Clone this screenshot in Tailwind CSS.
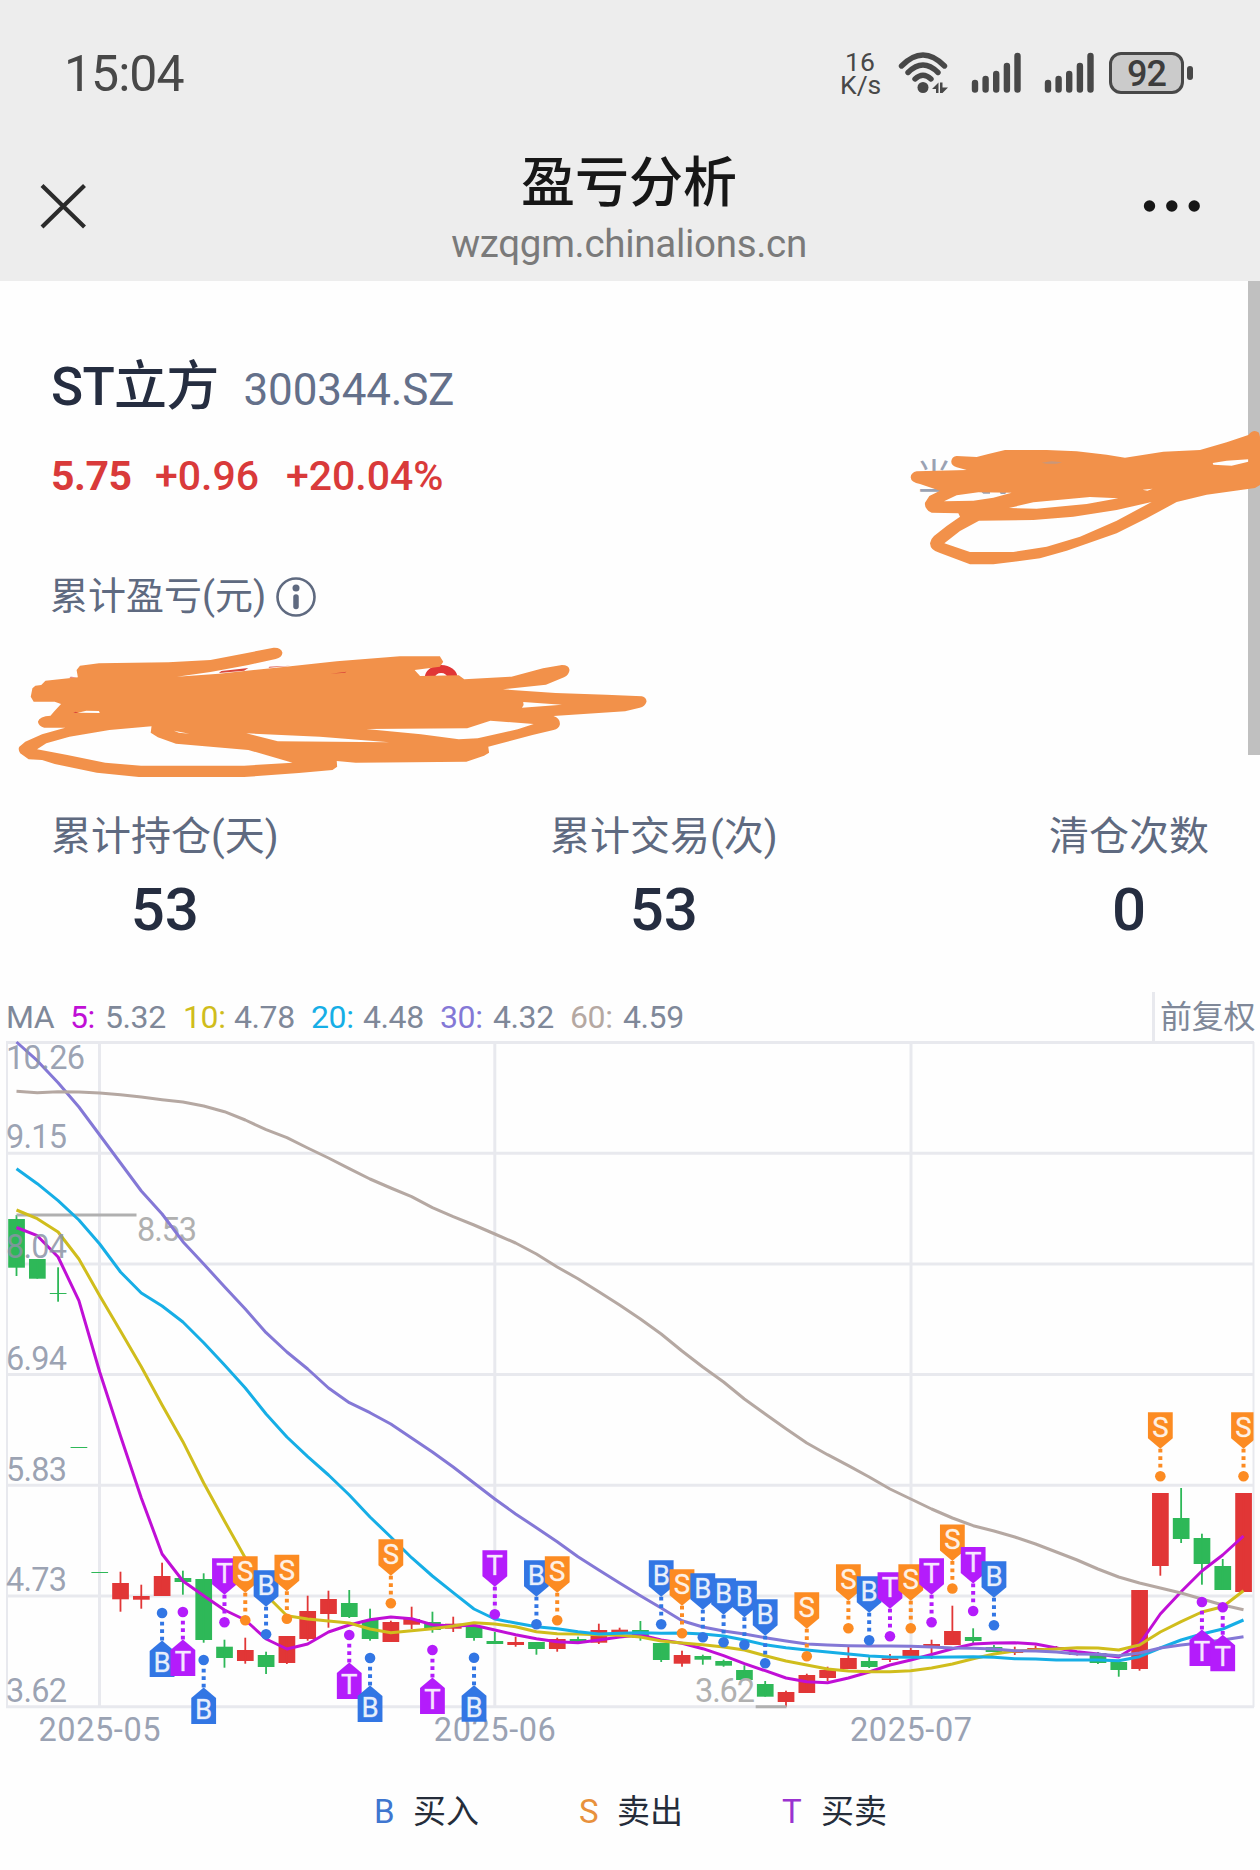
<!DOCTYPE html>
<html lang="zh-CN">
<head>
<meta charset="utf-8">
<meta name="viewport" content="width=device-width, initial-scale=1">
<title>盈亏分析</title>
<script src="https://cdn.jsdelivr.net/npm/@tailwindcss/browser@4"></script>
</head>
<body class="bg-white">
<div class="relative w-[1260px] h-[1870px] overflow-hidden bg-[#fefefe] font-['Roboto','Noto_Sans_CJK_SC',sans-serif]">

  <header class="h-[281px] bg-[#ededed]">
    <!-- status bar -->
    <div class="flex h-[145px] items-center justify-between pl-[64px] pr-[67px]">
      <div class="mt-[2px] text-[50px] leading-[60px] tracking-[-1px] text-[#484848]">15:04</div>
      <div class="flex h-[48px] items-center text-[#484848]">
        <div class="mr-[18px] w-[40px] text-center text-[26.500px] leading-[23px]"><div>16</div><div>K/s</div></div>
        <svg class="mr-[22px]" width="51" height="42" viewBox="0 0 51 42" fill="none" stroke="#484848" stroke-width="5.4" stroke-linecap="round">
          <path d="M3.5 14Q25 -8 46.500 14M10 20.500Q25 5.500 40 20.500M17 27Q25 19.500 33 27"/>
          <circle cx="25" cy="35.500" r="5.500" fill="#484848" stroke="none"/>
          <path d="M34 37L40.500 30.500V41H38V37ZM42 30.500H44.500V35.500H50L44.500 41H42Z" fill="#484848" stroke="none"/>
        </svg>
        <svg class="mr-[23px]" width="50" height="42" viewBox="0 0 50 42" stroke="#484848" stroke-width="6.4" stroke-linecap="round"><path d="M4 31V37.500M14.600 27V37.500M25.200 22V37.500M35.900 14V37.500M46.500 4V37.500"/></svg>
        <svg class="mr-[15px]" width="50" height="42" viewBox="0 0 50 42" stroke="#484848" stroke-width="6.4" stroke-linecap="round"><path d="M4 31V37.500M14.600 27V37.500M25.200 22V37.500M35.900 14V37.500M46.500 4V37.500"/></svg>
        <div class="flex items-center">
          <div class="flex h-[42px] w-[75px] items-center justify-center rounded-[12px] border-[3.500px] border-[#484848] bg-[#cbcbcb] pt-[2px] text-[36px] font-medium leading-[40px] tracking-[-1px] text-[#3d3d3d]">92</div>
          <div class="ml-[3px] h-[14px] w-[6px] rounded-full bg-[#484848]"></div>
        </div>
      </div>
    </div>
    <!-- title bar -->
    <div class="grid h-[136px] grid-cols-[1fr_auto_1fr] pl-[40px] pr-[42px]">
      <svg class="mt-[38px]" width="46" height="46" viewBox="0 0 46 46" stroke="#2b2b2b" stroke-width="4.200"><path d="M2 2.500L44.500 44M44.500 2.500L2 44"/></svg>
      <div class="flex flex-col items-center pt-[4px]">
        <h1 class="text-[54px] font-medium leading-[70px] text-[#171717]">盈亏分析</h1>
        <p class="text-[38.500px] leading-[50px] tracking-[-0.3px] text-[#7a7a7a]">wzqgm.chinalions.cn</p>
      </div>
      <svg class="mt-[54px] mr-[17px] justify-self-end" width="58" height="14" viewBox="0 0 58 14" fill="#171717"><circle cx="6.500" cy="7" r="5.700"/><circle cx="28.800" cy="7" r="5.700"/><circle cx="51.200" cy="7" r="5.700"/></svg>
    </div>
  </header>

  <!-- stock summary -->
  <section class="h-[532px] px-[51px] pt-[76px]">
    <div class="flex items-baseline">
      <h2 class="text-[53px] font-medium leading-[60px] text-[#252d40] tracking-[-0.7px]">ST立方</h2>
      <span class="ml-[25px] text-[44px] leading-[60px] tracking-[-0.2px] text-[#64708a]">300344.SZ</span>
    </div>
    <div class="mt-[31px] flex h-[50px] items-start justify-between">
      <div class="flex text-[41px] leading-[50px] text-[#d93a3a]">
        <span class="w-[104px] font-bold tracking-[-0.5px]">5.75</span>
        <span class="w-[131px] font-medium">+0.96</span>
        <span class="font-medium">+20.04%</span>
      </div>
      <span class="mr-[257px] mt-[2px] text-[36px] leading-[50px] text-[#9aa2b3]">当</span>
    </div>
    <div class="mt-[73px] flex items-center text-[38px] leading-[44px] text-[#5f6a80]">
      <span class="-ml-px">累计盈亏(元)</span>
      <svg class="ml-[9px] mt-[2px]" width="42" height="42" viewBox="0 0 42 42" fill="none" stroke="#5f6a80"><circle cx="21" cy="21" r="18.500" stroke-width="2.600"/><circle cx="21" cy="12" r="3.500" fill="#5f6a80" stroke="none"/><path d="M21 21V30.500" stroke-width="5.500" stroke-linecap="round"/></svg>
    </div>
  </section>

  <!-- statistics -->
  <section class="flex h-[183px] justify-between px-[51px] text-center">
    <div><div class="text-[40px] leading-[48px] text-[#5f6a80]">累计持仓(天)</div><div class="mt-[14px] text-[60px] font-medium leading-[70px] text-[#252d40]">53</div></div>
    <div><div class="text-[40px] leading-[48px] text-[#5f6a80]">累计交易(次)</div><div class="mt-[14px] text-[60px] font-medium leading-[70px] text-[#252d40]">53</div></div>
    <div><div class="text-[40px] leading-[48px] text-[#5f6a80]">清仓次数</div><div class="mt-[14px] text-[60px] font-medium leading-[70px] text-[#252d40]">0</div></div>
  </section>

  <!-- moving average legend -->
  <div class="flex h-[44px] justify-between pl-[6px] text-[32px] leading-[40px] tracking-[-0.4px] text-[#7f8899]">
    <div class="flex pt-px">
      <span class="w-[64px]">MA</span>
      <span class="w-[35px] text-[#c00fd6]">5:</span><span class="w-[78px]">5.32</span>
      <span class="w-[51px] text-[#d0bd1c]">10:</span><span class="w-[77px]">4.78</span>
      <span class="w-[52px] text-[#16aee6]">20:</span><span class="w-[77px]">4.48</span>
      <span class="w-[53px] text-[#8478d6]">30:</span><span class="w-[77px]">4.32</span>
      <span class="w-[53px] text-[#b5a8a2]">60:</span><span>4.59</span>
    </div>
    <div class="-mt-[4px] h-[50px] w-[108px] border-l-[3px] border-[#e8e9ee] pl-[5px] pt-[5px] tracking-[-0.3px]">前复权</div>
  </div>

  <svg id="chart" class="block" width="1260" height="750" viewBox="0 1040 1260 750" font-family="Roboto, sans-serif"></svg>

  <!-- marker legend -->
  <div class="flex text-[33px] leading-[40px] text-[#252d3a] pl-[374px] pt-[2px]">
    <span class="w-[39px] text-[#3f76d0]">B</span><span class="w-[166px]">买入</span>
    <span class="w-[38px] text-[#e8913c]">S</span><span class="w-[165px]">卖出</span>
    <span class="w-[39px] text-[#9a33d0]">T</span><span>买卖</span>
  </div>

  <div class="absolute right-0 top-[281px] h-[474px] w-[12px] bg-[#c0c0c0]"></div>

  <!-- hand-drawn redactions -->
  <svg class="absolute left-0 top-0" width="1260" height="1000" viewBox="0 0 1260 1000">
    <g transform="translate(0 340) scale(.42092 .33333)">
      <ellipse cx="1048" cy="1014" rx="27" ry="27" fill="none" stroke="#e13636" stroke-width="24"/>
      <path fill="#f2914a" fill-rule="evenodd" d="M182 990L190 977L235 970L400 967L500 960L590 938L650 923Q668 922 671 938Q670 952 655 957L590 975L500 996L420 1010L520 1001L690 979L800 964L950 949H1045L1053 965L1045 980L985 990L998 1008L1090 1006L1103 1018L1215 1010L1290 985L1335 975Q1352 975 1353 990Q1352 1005 1340 1012L1297 1034L1195 1048L1320 1059L1440 1064L1525 1069Q1536 1073 1536 1085Q1532 1100 1520 1103L1485 1114L1315 1128Q1332 1136 1330 1154Q1328 1165 1315 1170L1265 1185L1160 1220L1162 1238L1150 1247L1108 1265L845 1268L800 1263L801 1280L790 1290L710 1299L580 1311H330L230 1298L130 1272L100 1260L68 1258L48 1240Q42 1228 46 1220L60 1205L100 1183L155 1163H105Q92 1158 90 1145Q94 1128 120 1127L128 1115L145 1092L130 1085H80L73 1070L77 1045L84 1037L98 1035L108 1022L185 1012Z
        M88 1228L110 1210L165 1190L260 1170L360 1159L358 1178L375 1192L418 1211L590 1230L695 1268L580 1277H335L250 1268L160 1245Z
        M870 1167L1110 1165L1165 1142L1268 1152L1230 1168L1135 1195L1090 1198L1000 1183Z
        M585 1180L760 1190L925 1207L660 1204Z
        M413 1172L450 1181L425 1178ZM1243 1086L1335 1094L1240 1103L1244 1095ZM185 1118L205 1112L235 1113L237 1119Z"/>
      <path fill="#d9463b" d="M520 999L526 993L590 984L580 992ZM638 983L640 980L690 977ZM165 1013L168 1010L182 1012ZM174 1119L180 1115L186 1119ZM785 1001L823 995L820 998Z"/>
    </g>
    <g transform="translate(860 400) scale(.33333)">
      <path fill="#9aa2b3" d="M362 274H390V281H370ZM418 274H440L436 282H422Z"/>
      <path fill="#f2914a" fill-rule="evenodd" d="M152 232Q153 218 170 214L320 210L290 202Q272 196 274 183Q276 169 290 168L350 171L385 162L435 150H560L650 154L740 164L795 173L910 155L1020 150L1100 127L1165 105Q1180 86 1197 98L1200 110V255L1185 264L1040 284L950 306L860 355L770 400L620 452L540 475L400 493H330L240 459Q211 452 210 430Q211 418 222 408L260 378L300 350L295 340L215 338Q192 328 195 308L208 288L240 272L180 252Q153 248 152 232Z
        M252 304L290 286L355 277L455 278L400 293L340 302Z
        M447 324L520 307L690 291L775 295L680 312L530 326Z
        M253 430L300 393L357 362L520 360L640 350L770 330L875 306L770 362L660 410L560 440L460 456H330Z
        M1058 189L1100 182L1165 178V185L1115 197L1060 194ZM848 269L878 266L862 272Z"/>
      <path fill="#c9977a" d="M545 188L575 184L606 187L590 191H560Z"/>
    </g>
  </svg>
</div>

<script>
  const xAt = i => 16.5 + i * 20.797;
  const RED = '#e13636', GREEN = '#2eb858';

  // colour, body top, body bottom, high, low
  const candles = [
    ['g',1219,1267.7,1215,1276],['g',1259,1278.7,1259,1278.7],['g',1293,1294,1267.3,1301.7],['g',1447,1448,1447,1448],['g',1572,1573,1572,1573],
    ['r',1583,1599.3,1571.7,1611.7],['r',1596,1599.7,1584.7,1608.7],['r',1576,1596,1562.7,1596],['g',1578,1582,1570.7,1594.7],['g',1579,1640,1573.3,1642.7],
    ['g',1646.7,1658,1639.7,1667.7],['r',1650,1661,1637.7,1663.7],['g',1655,1667,1651.7,1674],['r',1636,1663,1636,1664],['r',1611,1639,1595.7,1640.7],
    ['r',1599,1614,1590.7,1627.7],['g',1603,1617,1590,1618],['g',1620,1639,1608.7,1640.7],['r',1622,1642,1620.7,1642],['r',1619,1624.7,1606.7,1629],
    ['g',1622,1630,1611.7,1632.7],['r',1623.7,1628.7,1616.7,1632],['g',1626,1638,1626,1640.7],['g',1641,1644,1632,1644],['r',1642,1645,1636.7,1646.7],
    ['g',1642,1649,1642,1654.7],['r',1639,1649,1637.7,1651.7],['g',1639,1642.7,1636.7,1644],['r',1630,1642.7,1623.7,1644],['r',1629.7,1633,1627.7,1635],
    ['g',1630,1637.7,1621,1640.7],['g',1643,1660,1643,1662],['r',1655,1663.7,1650.7,1666.7],['g',1656,1659.7,1654.7,1664.7],['g',1661,1665.7,1659.7,1666.7],
    ['g',1670,1680,1665.3,1680],['g',1684,1696.7,1681,1696.7],['r',1692,1702,1690.7,1706.7],['r',1675,1693,1673.7,1693],['r',1670,1678,1666.7,1681],
    ['r',1658,1669,1646.7,1669],['g',1661,1667,1657,1668],['r',1658.3,1660,1654,1662],['r',1650,1656,1648,1656],['r',1644,1646.7,1639.7,1659],
    ['r',1631,1645,1605.7,1645],['g',1637,1641,1628.3,1643.3],['g',1647,1652,1645,1652],['r',1650,1653,1646.7,1655],['r',1648,1649.5,1645.5,1650],
    ['r',1647,1649,1646,1650],['r',1653.7,1655,1652,1655.5],['g',1653,1663,1652,1664],['g',1662,1670,1660,1676.7],['r',1590,1669,1590,1670.7],
    ['r',1493,1566,1493,1575.7],['g',1518,1539,1488,1543],['g',1538,1564,1533.7,1584.7],['g',1566,1590,1559,1590],['r',1493,1592,1493,1592]
  ];

  const averages = [
    ['#c00fd6',[1227.5,1235.7,1257,1300.7,1372,1436,1498,1554,1581,1595.7,1610,1620,1639,1649,1644,1632,1625,1619.7,1617,1618.7,1624.7,1626,1625.3,1630,1634.7,1638.7,1641.7,1642.7,1640,1637,1635,1640,1643.3,1648.7,1655.7,1663.7,1670.7,1678,1681.7,1682.7,1678,1672,1665,1660,1654.5,1648.7,1644,1643,1642.7,1644,1648,1651.7,1654,1657,1644,1614,1591.7,1571,1555,1536]],
    ['#d0bd1c',[1210,1218.7,1232,1259,1295.7,1331,1366.7,1405,1441.7,1483,1521,1558,1595,1615.7,1619,1621,1623,1629,1632.7,1630.7,1628.7,1626,1622.7,1624,1626.7,1631.7,1633.7,1634,1634.7,1635.3,1637,1641,1643,1644.7,1647,1650,1655.7,1661,1665,1669,1671,1671.7,1671.7,1670.7,1668,1664,1658.7,1654,1651,1650,1649,1647.7,1648,1650,1645,1632,1621.7,1612,1606.7,1590.7]],
    ['#16aee6',[1168.7,1183.7,1200.7,1220,1244,1272,1293,1306,1322,1342.7,1365,1388,1414,1437,1456.7,1475,1495,1517,1537,1557.7,1576,1592.7,1609,1619,1623,1626.7,1628.7,1631.7,1634,1633.3,1632.7,1633.3,1633,1634,1636,1640,1644.7,1647.7,1650,1652,1654,1656,1657,1657.3,1657.3,1657,1656.7,1657.3,1658.7,1659,1660,1660,1660,1660.7,1656.7,1648,1640,1634,1629,1620]],
    ['#8478d6',[1042,1060.7,1082.7,1107,1135,1163,1191,1214,1241.7,1264,1286.7,1309,1332.7,1352,1369,1388,1402.7,1412.7,1424,1438,1452,1467,1483,1499,1514,1527.7,1541.7,1556.7,1570,1583,1595.7,1608,1620.7,1627,1631,1634,1637.7,1641,1644,1645,1645.7,1646,1646,1646.3,1647,1648,1648.3,1649,1650.7,1651,1652,1654,1654.3,1655.7,1653,1648,1645,1642.7,1640,1636.7]],
    ['#b5a8a2',[1091.3,1092.7,1091.7,1092,1093,1094.7,1097,1099.7,1102,1106,1111.7,1120,1129.7,1137.7,1148,1158,1168.7,1179,1188,1196.7,1207.7,1216.7,1225,1234,1243,1254,1267,1278.7,1291.7,1305,1319,1334,1351,1367,1382,1399,1414,1428.7,1443,1454.7,1465.7,1477,1489,1499,1509,1518,1525.7,1531,1537,1544,1552,1560,1569,1577,1583,1588,1593,1599,1605,1609.7]]
  ];

  // candle index, kind, dot y, 1 = flag above the dot, -1 = flag below
  const markers = [
    [7,'B',1613,-1],[8,'T',1612,-1],[9,'B',1660,-1],[10,'T',1622.3,1],[11,'S',1620.3,1],[12,'B',1634.3,1],[13,'S',1618.7,1],
    [16,'T',1635,-1],[17,'B',1658,-1],[18,'S',1603.3,1],[20,'T',1650,-1],[22,'B',1657.7,-1],[23,'T',1614.3,1],[25,'B',1624.3,1],[26,'S',1620.3,1],
    [31,'B',1624.3,1],[32,'S',1633.3,1],[33,'B',1637.3,1],[34,'B',1642.3,1],[35,'B',1644.7,1],[36,'B',1663.3,1],[38,'S',1656.3,1],
    [40,'S',1628.3,1],[41,'B',1640.3,1],[42,'T',1636.3,1],[43,'S',1628.3,1],[44,'T',1622.3,1],[45,'S',1588.5,1],[46,'T',1611,1],[47,'B',1625.3,1],
    [55,'S',1476.3,1],[57,'T',1602,-1],[58,'T',1607.3,-1],[59,'S',1476.3,1]
  ];
  const kindColor = { B: '#3276e4', S: '#fc8b22', T: '#b41cfb' };

  let out = '<clipPath id="plot"><rect x="0" y="1040" width="1253.5" height="720"/></clipPath>';

  // grid
  out += '<g stroke="#e8e9ee" stroke-width="3">';
  for (let k = 0; k < 7; k++) { const y = 1042.5 + k * 110.7; out += `<path d="M6 ${y}H1254"/>`; }
  for (const x of [99.5, 494.8, 911]) out += `<path d="M${x} 1042V1707"/>`;
  out += '<path stroke-width="2" d="M7 1042V1707M1253.5 1042V1707"/></g>';

  for (const [i, x] of [[0, 99.5], [1, 494.8], [2, 911]])
    out += `<text x="${x}" y="1740.7" font-size="32.500" fill="#9aa2b3" text-anchor="middle" textLength="122">2025-0${5 + i}</text>`;

  // candles
  candles.forEach(([c, t, b, h, l], i) => {
    const x = xAt(i), col = c === 'r' ? RED : GREEN;
    out += `<rect x="${x - 8.3}" y="${t}" width="16.7" height="${b - t}" fill="${col}"/><rect x="${x - .9}" y="${h}" width="1.8" height="${l - h}" fill="${col}"/>`;
  });

  // high and low callouts
  out += '<path d="M16.5 1215H136.500M755.700 1706.700H786.500" stroke="#b0b0b0" stroke-width="3"/>';
  out += '<g font-size="32.500" fill="#b0b0b0"><text x="137" y="1241" textLength="60">8.53</text><text x="695" y="1701.7" textLength="60">3.62</text></g>';

  // moving averages
  for (const [col, ys] of averages)
    out += `<polyline fill="none" stroke="${col}" stroke-width="3" stroke-linejoin="round" points="${ys.map((y, i) => xAt(i).toFixed(1) + ',' + y).join(' ')}"/>`;

  // price axis
  [['10.26',1069],['9.15',1147.7],['8.04',1258],['6.94',1369.7],['5.83',1480.7],['4.73',1590.7],['3.62',1701.7]].forEach(([t, y], k) => {
    out += `<text x="6" y="${y}" font-size="32.500" fill="#8a93a6" fill-opacity=".85" textLength="${k ? 61 : 79}">${t}</text>`;
  });

  // trade markers
  out += '<g clip-path="url(#plot)">';
  for (const [i, k, y, d] of markers) {
    const x = xAt(i), c = kindColor[k], tip = y - d * 27.5, sh = y - d * 38, end = y - d * 64;
    out += `<path d="M${x} ${tip}V${y - d * 6}" stroke="${c}" stroke-width="4" stroke-dasharray="3.7 3.8"/>`
      + `<circle cx="${x}" cy="${y}" r="5.300" fill="${c}"/>`
      + `<path d="M${x - 12.4} ${end}H${x + 12.4}V${sh}L${x} ${tip}L${x - 12.4} ${sh}Z" fill="${c}"/>`
      + `<text x="${x}" y="${end + d * 15 + 9.8}" font-size="27.500" fill="#fff" fill-opacity=".88" stroke="#fff" stroke-opacity=".5" stroke-width=".6" text-anchor="middle">${k}</text>`;
  }
  out += '</g>';
  document.getElementById('chart').innerHTML = out;
</script>
</body>
</html>
